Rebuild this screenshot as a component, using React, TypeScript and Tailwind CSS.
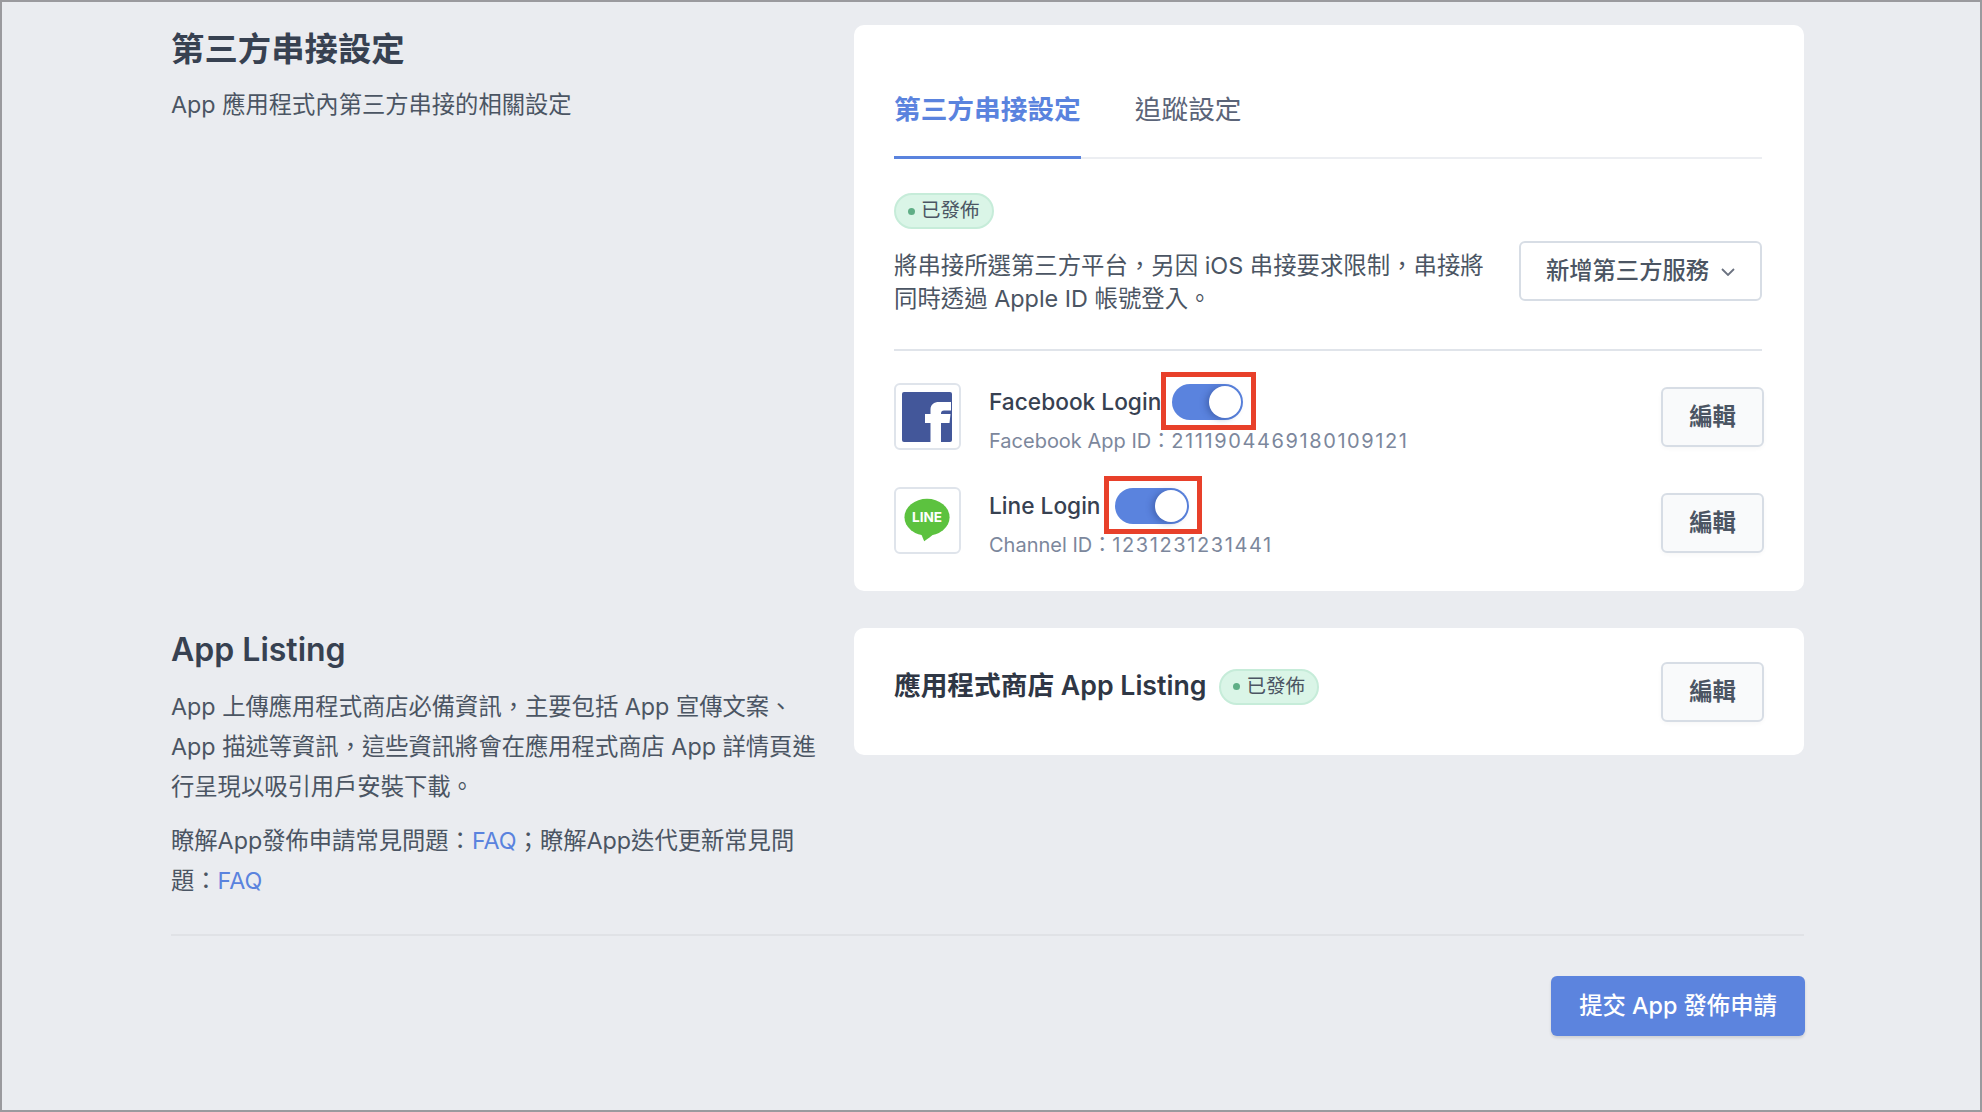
import React from 'react';

const PublishedBadge = () => (
  <span className="flex items-center w-[100px] h-[36px] rounded-full border-2 border-[#c6ecd9] bg-[#daf5e7] pl-[12px] text-[19.5px] leading-none text-[#4b5563]">
    <span className="w-[7px] h-[7px] rounded-full bg-[#5fae86] mr-[6px]" />
    已發佈
  </span>
);

const EditButton = () => (
  <button className="w-[103px] h-[60px] rounded-[6px] border-2 border-[#d7dde5] bg-[#f9fafb] text-[23.3px] font-semibold text-[#4b5563] shadow-[0_2px_4px_rgba(0,0,0,0.03)]">
    編輯
  </button>
);

// switch with the red annotation frame drawn over it
const Toggle = ({ className = '' }: { className?: string }) => (
  <span className={`relative block h-[36px] rounded-full bg-[#5a83de] ${className}`}>
    <span className="absolute right-[2px] top-[2px] w-[32px] h-[32px] rounded-full bg-white shadow-[-3px_1px_6px_rgba(30,50,110,0.35)]" />
    <span className="absolute -left-[11px] -right-[13px] -top-[12px] -bottom-[10px] border-[5px] border-[#e8402a]" />
  </span>
);

const FacebookIcon = () => (
  <svg viewBox="0 0 50 50" className="w-[50px] h-[50px] -ml-[1px]">
    <rect width="50" height="50" rx="2" fill="#43579a" />
    <path
      fill="#fff"
      d="M28.5 50V31H23v-9h5.5v-4.5C28.5 12.5 32 10 37 10h12v8.5h-7c-2 0-3 1-3 3V22h9.5l-1 9H39v19z"
    />
  </svg>
);

const LineIcon = () => (
  <svg viewBox="0 0 67 67" className="w-[67px] h-[67px]">
    <ellipse cx="33" cy="30" rx="24" ry="19.5" fill="#5cc23f" />
    <path d="M26 46 L30 55.5 C33 53.5 38 50 42 46 z" fill="#5cc23f" />
    <text
      x="33"
      y="35"
      textAnchor="middle"
      fontSize="14.5"
      fontWeight="700"
      fill="#fff"
      fontFamily="Inter, sans-serif"
    >
      LINE
    </text>
  </svg>
);

const LoginRow = ({
  icon,
  name,
  label,
  value,
  toggle,
  edit,
  className = '',
}: {
  icon: React.ReactNode;
  name: string;
  label: string;
  value: string;
  toggle: string;
  edit: string;
  className?: string;
}) => (
  <div className={`flex items-start h-[67px] ${className}`}>
    <div className="flex items-center justify-center w-[67px] h-[67px] rounded-[6px] border-2 border-[#dfe4eb]">
      {icon}
    </div>
    <div className="ml-[28px] mt-[1px] flex-1">
      <div className="flex items-center h-[36px] text-[22.7px] font-medium text-[#374151] leading-none">
        {name}
        <Toggle className={toggle} />
      </div>
      <div className="mt-[6px] text-[20px] leading-[30px] text-[#7c879c] whitespace-nowrap">
        {label}
        <span className="tracking-[1.6px]">{value}</span>
      </div>
    </div>
    <div className={edit}>
      <EditButton />
    </div>
  </div>
);

export default function App() {
  return (
    <div className="w-[1982px] h-[1112px] overflow-hidden border-2 border-[#9a9a9e] bg-[#eaecf0] pl-[169px] pr-[176px] pt-[23px] font-['Inter','Noto_Sans_CJK_TC',sans-serif] text-[#4b5563]">
      {/* Third party section */}
      <div className="flex items-start">
        <div className="w-[683px]">
          <h2 className="-mt-[1px] text-[33.4px] leading-[50px] font-semibold text-[#374151]">第三方串接設定</h2>
          <p className="mt-[11px] text-[23.3px] leading-[40px]">App 應用程式內第三方串接的相關設定</p>
        </div>
        <div className="w-[950px] h-[566px] rounded-[10px] bg-white pl-[40px] pr-[40px] pt-[64px]">
          <div className="flex border-b-2 border-[#eceef2] mr-[2px] h-[70px] text-[26.7px] leading-[40px]">
            <div className="h-[70px] border-b-[3px] border-[#5a83de] font-semibold text-[#5a83de]">第三方串接設定</div>
            <div className="ml-[54px] text-[#5b6478]">追蹤設定</div>
          </div>
          <div className="mt-[34px]">
            <PublishedBadge />
          </div>
          <div className="flex items-start justify-between mt-[12px] mr-[2px] pb-[34px] border-b-2 border-[#e0e4ea]">
            <p className="w-[600px] pt-[8px] text-[23.4px] leading-[33px]">
              將串接所選第三方平台，另因 iOS 串接要求限制，串接將同時透過 Apple ID 帳號登入。
            </p>
            <button className="flex items-center justify-center w-[243px] h-[60px] pt-[1px] rounded-[6px] border-2 border-[#d7dde5] text-[23.3px] font-medium text-[#4b5563]">
              新增第三方服務
              <svg viewBox="0 0 14 8" className="w-[14px] h-[8px] ml-[12px]" fill="none" stroke="#6b7280" strokeWidth="1.8">
                <path d="M1 1l6 6 6-6" />
              </svg>
            </button>
          </div>
          <LoginRow
            className="mt-[32px]"
            icon={<FacebookIcon />}
            name="Facebook Login"
            label="Facebook App ID："
            value="2111904469180109121"
            toggle="ml-[11px] w-[71px]"
            edit="mt-[4px]"
          />
          <LoginRow
            className="mt-[37px]"
            icon={<LineIcon />}
            name="Line Login"
            label="Channel ID："
            value="1231231231441"
            toggle="ml-[14px] w-[74px]"
            edit="mt-[6px]"
          />
        </div>
      </div>

      {/* App listing section */}
      <div className="flex items-start mt-[37px]">
        <div className="w-[683px]">
          <h2 className="-mt-[3px] text-[32px] leading-[50px] font-semibold text-[#374151]">App Listing</h2>
          <p className="mt-[12px] text-[23.3px] leading-[40px] whitespace-nowrap">
            App 上傳應用程式商店必備資訊，主要包括 App 宣傳文案、
            <br />
            App 描述等資訊，這些資訊將會在應用程式商店 App 詳情頁進
            <br />
            行呈現以吸引用戶安裝下載。
          </p>
          <p className="mt-[14px] text-[23.3px] leading-[40px] whitespace-nowrap">
            瞭解App發佈申請常見問題：<a className="text-[#5a83de]">FAQ</a>；瞭解App迭代更新常見問
            <br />
            題：<a className="text-[#5a83de]">FAQ</a>
          </p>
        </div>
        <div className="flex items-center w-[950px] h-[127px] rounded-[10px] bg-white pl-[40px] pr-[40px]">
          <h3 className="-mt-[12px] text-[26.7px] font-semibold text-[#2f3745]">應用程式商店 App Listing</h3>
          <div className="ml-[13px] mr-auto -mt-[10px]">
            <PublishedBadge />
          </div>
          <div className="mt-[1px]">
            <EditButton />
          </div>
        </div>
      </div>

      {/* Footer */}
      <div className="mt-[33px] border-t-2 border-[#e0e2e6] flex justify-end">
        <button className="mt-[40px] -mr-px w-[254px] h-[60px] rounded-[6px] bg-[#5c84de] text-[23.3px] font-medium text-white shadow-[0_2px_3px_rgba(0,0,0,0.12)]">
          提交 App 發佈申請
        </button>
      </div>
    </div>
  );
}
